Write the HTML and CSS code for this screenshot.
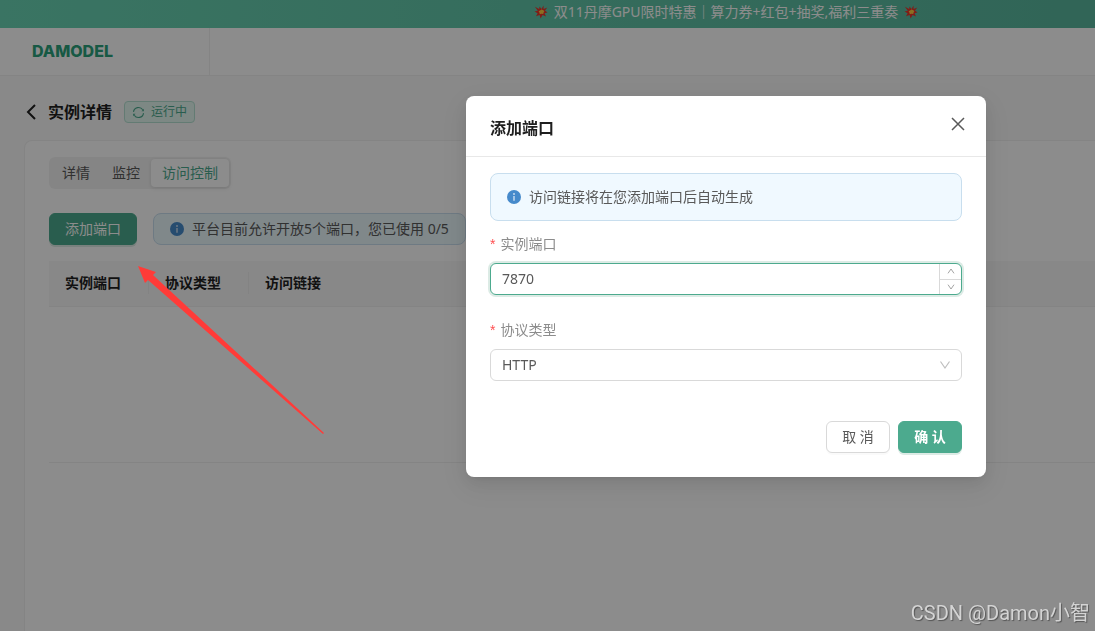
FILE: index.html
```html
<!DOCTYPE html>
<html lang="zh-CN">
<head>
<meta charset="utf-8">
<title>实例详情 - DAMODEL</title>
<link rel="stylesheet" href="styles.css">
</head>
<body>
<svg class="sprite" aria-hidden="true">
  <symbol id="burst" viewBox="0 0 14 14">
    <path fill="#e8352c" d="M7.5 4 9.5.5 9.6 4 13.3 2.6 11 5.6 13.5 7.4 10.6 8.2 12 11.6 8.6 10 6.6 13.6 5.6 10 2 11.3 3.6 8.2.5 6.6 3.8 5.8.9 1.8 5.2 4 5.5 1.6Z"/>
    <path fill="#ffc83d" d="M7.4 4.6 8.9 5 10.4 6 9.6 7.5 9.2 9 7.4 8.8 5.8 9.2 5.4 7.5 4.6 6.2 6 5.6Z"/>
  </symbol>
  <symbol id="info" viewBox="0 0 14 14">
    <circle cx="7" cy="7" r="7" fill="#468acb"/>
    <path fill="#fff" fill-opacity=".85" d="M6.2 3.2h1.6v1.5H6.2zM6.4 5.9h1.2v4.9H6.4z"/>
  </symbol>
  <symbol id="down" viewBox="0 0 12 12">
    <path d="M1.5 2.5 6 9l4.5-6.5" fill="none" stroke="currentColor" stroke-width="1.2"/>
  </symbol>
  <symbol id="up" viewBox="0 0 12 12">
    <path d="M1.5 9.5 6 3l4.5 6.5" fill="none" stroke="currentColor" stroke-width="1.2"/>
  </symbol>
</svg>

<div class="app">
  <div class="banner">
    <svg class="burst"><use href="#burst"/></svg>
    <span>双11丹摩GPU限时特惠｜算力券+红包+抽奖,福利三重奏</span>
    <svg class="burst"><use href="#burst"/></svg>
  </div>
  <header class="topbar"><div class="brand">DAMODEL</div></header>

  <main class="content">
    <div class="page-head">
      <button class="back" aria-label="返回">
        <svg viewBox="0 0 10 16"><path d="M9 1 2 8l7 7" fill="none" stroke="currentColor" stroke-width="2"/></svg>
      </button>
      <h1>实例详情</h1>
      <span class="status">
        <svg viewBox="0 0 14 14"><g fill="none" stroke="currentColor" stroke-width="1.2"><path d="M1.6 6.4A5.5 5.5 0 0 1 11.6 4M12.4 7.6A5.5 5.5 0 0 1 2.4 10"/></g><path fill="currentColor" d="M12.8 3v2.6h-2.6zM1.2 11V8.4h2.6z"/></svg>
        运行中
      </span>
    </div>

    <section class="card">
      <nav class="tabs">
        <button>详情</button><button>监控</button><button class="active">访问控制</button>
      </nav>
      <div class="actions">
        <button class="btn primary">添加端口</button>
        <div class="notice small"><svg class="info"><use href="#info"/></svg>平台目前允许开放5个端口，您已使用 0/5</div>
      </div>
      <table class="ports">
        <thead><tr><th class="fixed"><span>实例端口</span></th><th class="fixed"><span>协议类型</span></th><th><span>访问链接</span></th></tr></thead>
        <tbody><tr><td colspan="3"></td></tr></tbody>
      </table>
    </section>
  </main>
</div>

<div class="mask">
  <form class="modal" role="dialog" aria-labelledby="dialog-title">
    <div class="modal-head">
      <h2 id="dialog-title">添加端口</h2>
      <button type="button" class="close" aria-label="关闭">
        <svg viewBox="0 0 14 14"><path d="m1 1 12 12M13 1 1 13" stroke="currentColor" stroke-width="1.5"/></svg>
      </button>
    </div>
    <div class="modal-body">
      <div class="notice"><svg class="info"><use href="#info"/></svg>访问链接将在您添加端口后自动生成</div>
      <div class="field">
        <label for="port"><span class="star">*</span>实例端口</label>
        <div class="number">
          <input id="port" type="text" inputmode="numeric" value="7870">
          <div class="steps">
            <button type="button" aria-label="增加"><svg><use href="#up"/></svg></button>
            <button type="button" aria-label="减少"><svg><use href="#down"/></svg></button>
          </div>
        </div>
      </div>
      <div class="field next">
        <label for="protocol"><span class="star">*</span>协议类型</label>
        <div class="select">
          <select id="protocol"><option>HTTP</option></select>
          <svg><use href="#down"/></svg>
        </div>
      </div>
      <div class="modal-foot">
        <button type="button" class="btn">取 消</button>
        <button type="submit" class="btn primary strong">确 认</button>
      </div>
    </div>
  </form>
</div>

<svg class="pointer" viewBox="0 0 186 168" aria-hidden="true"><path fill="#ff3b38" d="M0 0 18 6 15 9 186 167 185 168 10 14 7 17Z"/></svg>
<div class="watermark">CSDN @Damon小智</div>
</body>
</html>
```
FILE: styles.css
```css
:root {
  --green: #4caa8e;
  --text: #595959;
  --title: #1f1f1f;
  --line: #d9d9d9;
  --center-shift: 357px;
}

* { box-sizing: border-box; }

body {
  margin: 0;
  overflow: hidden;
  color: var(--text);
  font: 14px/22px "Noto Sans", "Noto Sans CJK SC", sans-serif;
}

button, input, select { font: inherit; color: inherit; }
button { padding: 0; border: 0; background: none; cursor: pointer; }
h1, h2 { margin: 0; color: var(--title); font-size: 16px; line-height: 24px; font-weight: 700; }
svg { display: block; flex: none; }
.sprite { display: none; }

.app { display: flex; flex-direction: column; height: 100vh; background: #fafafa; }

.banner {
  display: flex;
  justify-content: center;
  align-items: center;
  gap: 6px;
  height: 28px;
  padding: 0 0 4px var(--center-shift);
  background: linear-gradient(90deg, #6ad4b4, #59b89e);
  color: #fff;
  white-space: nowrap;
}
.burst { width: 14px; height: 14px; }

.topbar { height: 48px; background: #fff; border-bottom: 1px solid #f0f0f0; }
.brand {
  width: 210px;
  height: 47px;
  padding-left: 32px;
  border-right: 1px solid #f0f0f0;
  color: #2ba37c;
  font: 800 16px/47px Inter, sans-serif;
}

.content { flex: 1; display: flex; flex-direction: column; padding: 24px 0 0 24px; }
.page-head { display: flex; align-items: center; height: 24px; margin-bottom: 16px; }
.back { width: 24px; padding-left: 2px; color: var(--title); }
.back svg { width: 10px; height: 16px; }
.status {
  display: flex;
  align-items: center;
  gap: 6px;
  height: 22px;
  margin-left: 12px;
  padding: 0 7px;
  border: 1px solid #b4e0d2;
  border-radius: 4px;
  background: #e4f8f1;
  color: var(--green);
  font-size: 12px;
}
.status svg { width: 13px; height: 13px; }

.card {
  flex: 1;
  padding: 16px 0 0 24px;
  border: solid #f0f0f0;
  border-width: 1px 0 0 1px;
  border-radius: 8px 0 0 0;
  background: #fff;
}
.tabs { display: flex; width: fit-content; padding: 2px; border-radius: 6px; background: #f3f3f3; }
.tabs button { height: 28px; padding: 0 11px; border-radius: 4px; }
.tabs .active { background: #fff; color: var(--green); box-shadow: 0 1px 4px rgba(0, 0, 0, .12); }

.actions { display: flex; gap: 16px; margin: 24px 0 16px; }
.btn {
  min-width: 64px;
  height: 32px;
  padding: 0 15px;
  border: 1px solid var(--line);
  border-radius: 6px;
  background: #fff;
  box-shadow: 0 2px 0 rgba(0, 0, 0, .02);
  white-space: nowrap;
}
.btn.primary { border-color: var(--green); background: var(--green); color: #fff; box-shadow: 0 2px 0 #dcebe5; }
.btn.strong { font-weight: 700; }

.notice {
  display: flex;
  align-items: center;
  gap: 8px;
  height: 48px;
  padding: 0 16px;
  border: 1px solid #c8deee;
  border-radius: 8px;
  background: #f0f9ff;
  white-space: nowrap;
}
.notice.small { height: 32px; background: #e9f7fc; }
.info { width: 14px; height: 14px; }

.ports { width: 100%; border-collapse: collapse; }
.ports th {
  height: 45px;
  padding: 0;
  border-bottom: 1px solid #f0f0f0;
  background: #f8f8f8;
  color: var(--title);
  text-align: left;
}
.ports th span { display: block; padding-left: 16px; }
.ports .fixed { width: 100px; }
.ports .fixed span { border-right: 1px solid #efefef; }
.ports td { height: 156px; border-bottom: 1px solid #f0f0f0; }

.mask {
  position: fixed;
  inset: 0;
  display: flex;
  justify-content: center;
  align-items: flex-start;
  padding: 96px 0 0 var(--center-shift);
  background: rgba(0, 0, 0, .45);
}
.modal {
  width: 520px;
  border-radius: 8px;
  background: #fff;
  box-shadow: 0 6px 16px rgba(0, 0, 0, .08), 0 3px 6px -4px rgba(0, 0, 0, .12), 0 9px 28px 8px rgba(0, 0, 0, .05);
}
.modal-head {
  display: flex;
  justify-content: space-between;
  align-items: flex-start;
  padding: 20px 20px 16px 24px;
  border-bottom: 1px solid #e8e8e8;
}
.close { padding: 1px; }
.close svg { width: 14px; height: 14px; }
.modal-body { padding: 16px 24px 24px; }

.field { margin-top: 12px; }
.field.next { margin-top: 24px; }
.field label { display: flex; gap: 5px; margin-bottom: 8px; color: #8c8c8c; }
.star { color: #ff4d4f; font-family: "Liberation Sans", sans-serif; }

.number, .select {
  position: relative;
  display: flex;
  height: 32px;
  border: 1px solid var(--line);
  border-radius: 6px;
  background: #fff;
}
.number { border-color: var(--green); box-shadow: 0 0 0 2px #dcebe5; overflow: hidden; }
.number input, .select select {
  flex: 1;
  min-width: 0;
  padding: 0 11px;
  border: 0;
  outline: 0;
  background: transparent;
  appearance: none;
}
.steps { display: flex; flex-direction: column; width: 22px; border-left: 1px solid var(--line); color: #8c8c8c; }
.steps button { flex: 1; display: flex; justify-content: center; align-items: center; }
.steps button + button { border-top: 1px solid var(--line); }
.steps svg { width: 8px; height: 8px; }
.select > svg { position: absolute; top: 9px; right: 10px; width: 12px; height: 12px; color: #bfbfbf; pointer-events: none; }

.modal-foot { display: flex; justify-content: flex-end; gap: 8px; margin-top: 40px; }

.pointer { position: fixed; left: 138px; top: 266px; width: 186px; height: 168px; pointer-events: none; }
.watermark {
  position: fixed;
  right: 5px;
  bottom: 4px;
  color: #d4d4d4;
  font: 20px/28px Roboto, "Noto Sans CJK SC", sans-serif;
  text-shadow: 1px 1px 1px rgba(0, 0, 0, .4);
}
```
